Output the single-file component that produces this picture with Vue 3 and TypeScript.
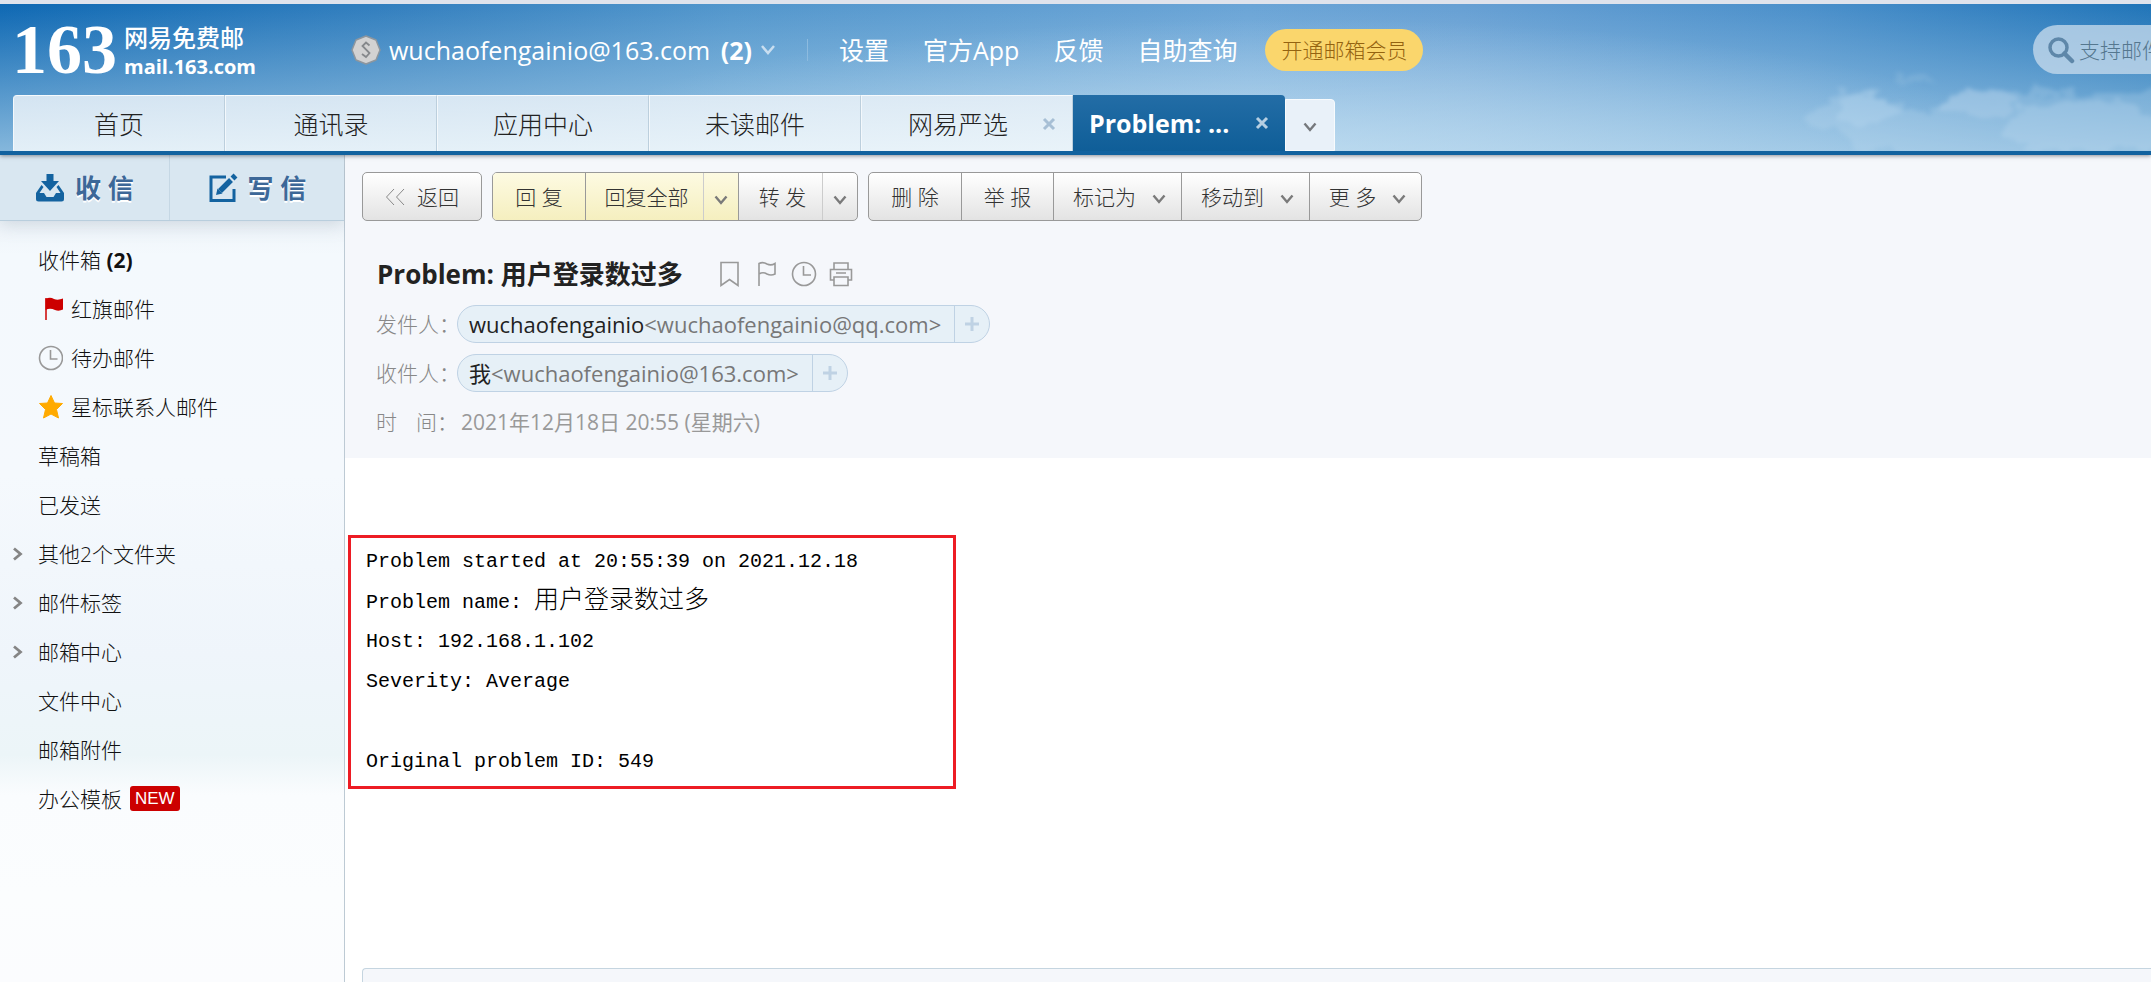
<script setup lang="ts">
import { ref } from 'vue'

interface Tab { label: string; closable?: boolean; active?: boolean }
interface Folder { label: string; count?: number; icon?: 'flag' | 'clock' | 'star'; expandable?: boolean; isNew?: boolean }
interface Contact { label: string; name: string; address: string }

const links: string[] = ['设置', '官方App', '反馈', '自助查询']
const tabs: Tab[] = [
  { label: '首页' },
  { label: '通讯录' },
  { label: '应用中心' },
  { label: '未读邮件' },
  { label: '网易严选', closable: true },
  { label: 'Problem: ...', closable: true, active: true },
]
const folders: Folder[] = [
  { label: '收件箱', count: 2 },
  { label: '红旗邮件', icon: 'flag' },
  { label: '待办邮件', icon: 'clock' },
  { label: '星标联系人邮件', icon: 'star' },
  { label: '草稿箱' },
  { label: '已发送' },
  { label: '其他2个文件夹', expandable: true },
  { label: '邮件标签', expandable: true },
  { label: '邮箱中心', expandable: true },
  { label: '文件中心' },
  { label: '邮箱附件' },
  { label: '办公模板', isNew: true },
]
const contacts: Contact[] = [
  { label: '发件人：', name: 'wuchaofengainio', address: '<wuchaofengainio@qq.com>' },
  { label: '收件人：', name: '我', address: '<wuchaofengainio@163.com>' },
]
const keyword = ref('')
</script>

<template>
  <div class="page">
    <header class="header">
      <svg class="clouds" viewBox="0 0 420 90" aria-hidden="true">
        <defs>
          <filter id="soft" x="-20%" y="-40%" width="140%" height="180%">
            <feTurbulence type="fractalNoise" baseFrequency=".035 .06" numOctaves="4" seed="7" result="n" />
            <feDisplacementMap in="SourceGraphic" in2="n" scale="34" xChannelSelector="R" yChannelSelector="G" />
            <feGaussianBlur stdDeviation="2" />
          </filter>
        </defs>
        <g fill="#c3dcef" filter="url(#soft)">
          <path opacity=".26" d="M70 60Q84 42 98 46Q110 28 126 32Q138 24 154 34L170 48Q186 62 204 46Q220 32 240 30Q266 24 296 32H460V110H190Q120 80 70 60Z" />
          <ellipse opacity=".26" cx="140" cy="46" rx="34" ry="14" />
          <ellipse opacity=".3" cx="250" cy="42" rx="38" ry="12" />
          <ellipse opacity=".28" cx="360" cy="66" rx="90" ry="26" />
          <ellipse opacity=".16" cx="180" cy="18" rx="20" ry="4" />
        </g>
      </svg>
      <div class="topbar">
        <a class="logo" href="#">
          <span class="logo-mark">163</span>
          <span class="logo-text"><span>网易免费邮</span><span class="logo-domain">mail.163.com</span></span>
        </a>
        <button class="account" type="button">
          <svg width="30" height="30" viewBox="0 0 30 30">
            <path d="M15 1L20 3L25 5L27 10L29 15L27 20L25 25L20 27L15 29L10 27L5 25L3 20L1 15L3 10L5 5L10 3Z" fill="#d2d2d2" stroke="#8d969e" stroke-width="1.5" stroke-linejoin="round" />
            <path d="M18.500 10.500L15 7.500L11.500 11L18.500 18L15 22L11 19" fill="none" stroke="#85888b" stroke-width="1.800" />
          </svg>
          <span class="address">wuchaofengainio@163.com <b>(2)</b></span>
          <svg width="16" height="12" viewBox="0 0 16 12"><path d="M2 2L8 9L14 2" fill="none" stroke="#c9def0" stroke-width="2.500" /></svg>
        </button>
        <span class="divider"></span>
        <nav class="links"><a v-for="l in links" :key="l" href="#">{{ l }}</a></nav>
        <button class="vip" type="button">开通邮箱会员</button>
        <label class="search">
          <svg width="28" height="28" viewBox="0 0 28 28"><circle cx="11.500" cy="11.500" r="8.500" fill="none" stroke="#5e87a9" stroke-width="3.500" /><path d="M17.500 17.500L25 25" stroke="#5e87a9" stroke-width="4.500" stroke-linecap="round" /></svg>
          <input v-model="keyword" type="text" placeholder="支持邮件全文搜索" aria-label="支持邮件全文搜索" />
        </label>
      </div>
      <nav class="tabs">
        <div v-for="t in tabs" :key="t.label" class="tab" :class="{ active: t.active, closable: t.closable }">
          <a href="#">{{ t.label }}</a>
          <button v-if="t.closable" type="button" aria-label="关闭">
            <svg width="14" height="14" viewBox="0 0 14 14"><path d="M2 2L12 12M12 2L2 12" fill="none" stroke="currentColor" stroke-width="3" /></svg>
          </button>
        </div>
        <button class="tab-more" type="button" aria-label="更多标签">
          <svg width="14" height="10" viewBox="0 0 14 10"><path d="M1.500 1.500L7 8L12.500 1.500" fill="none" stroke="#75787c" stroke-width="2.400" /></svg>
        </button>
      </nav>
    </header>

    <div class="body">
      <aside class="sidebar">
        <div class="actions">
          <button type="button">
            <svg width="30" height="30" viewBox="0 0 30 30" fill="#1463a0">
              <path d="M11.500 1H18.500V8H24L15 18L6 8H11.500Z" />
              <path fill-rule="evenodd" d="M6.500 12L1 20V26Q1 28.500 3.500 28.500H26.500Q29 28.500 29 26V20L23.500 12L21.500 14L25.500 20H21L18.500 24H11.500L9 20H4.500L8.500 14Z" />
            </svg>
            <span>收 信</span>
          </button>
          <button type="button">
            <svg width="30" height="30" viewBox="0 0 30 30" fill="none" stroke="#1463a0">
              <path d="M18 4H3V27.500H26V16" stroke-width="3" />
              <path d="M12 18L23 7" stroke-width="5.500" /><path d="M24.500 5.500L27.500 2.500" stroke-width="5.500" />
              <path d="M8 22L9.500 15.500L14.500 20.500Z" fill="#1463a0" stroke="none" />
            </svg>
            <span>写 信</span>
          </button>
        </div>
        <ul class="folders">
          <li v-for="f in folders" :key="f.label">
            <span class="expander">
              <svg v-if="f.expandable" width="10" height="14" viewBox="0 0 10 14"><path d="M1 1.500L7.500 7L1 12.500" fill="none" stroke="#858585" stroke-width="2.800" /></svg>
            </span>
            <a href="#">
              <svg v-if="f.icon === 'flag'" width="25" height="24" viewBox="0 0 25 24"><path d="M8 1V23" stroke="#c00" stroke-width="1.500" /><path d="M7.500 2Q12-.5 16 2Q20 3.500 25 1.500V12.500Q21 14.500 17 13Q12 10.500 7.500 13Z" fill="#c00" /></svg>
              <svg v-else-if="f.icon === 'clock'" width="25" height="26" viewBox="0 0 25 26" fill="none" stroke="#999" stroke-width="1.600"><circle cx="13" cy="13" r="11.500" /><path d="M12.500 5V14H19.500" /></svg>
              <svg v-else-if="f.icon === 'star'" width="25" height="26" viewBox="0 0 25 26"><path d="M13 1.500L16.500 9L24.500 9.500L18.500 15.500L20.500 24L13 20L5.500 24L7.500 15.500L1.500 9.500L9.500 9Z" fill="#fa0" stroke="#fa0" stroke-linejoin="round" /></svg>
              <span>{{ f.label }}<b v-if="f.count"> ({{ f.count }})</b></span>
              <em v-if="f.isNew">NEW</em>
            </a>
          </li>
        </ul>
      </aside>

      <main class="main">
        <section class="mail-head">
          <div class="toolbar">
            <div class="group"><button type="button" class="back">
              <svg width="20" height="18" viewBox="0 0 20 18" fill="none" stroke="#888"><path d="M9 1L1.500 9L9 17M19 1L11.500 9L19 17" /></svg>返回</button></div>
            <div class="group">
              <button type="button" class="yellow two">回 复</button>
              <button type="button" class="yellow all">回复全部</button>
              <button type="button" class="yellow drop" aria-label="回复选项"><svg class="chev" viewBox="0 0 14 10"><path d="M1.500 1.500L7 8L12.500 1.500" /></svg></button>
              <button type="button" class="forward">转 发</button>
              <button type="button" class="drop" aria-label="转发选项"><svg class="chev" viewBox="0 0 14 10"><path d="M1.500 1.500L7 8L12.500 1.500" /></svg></button>
            </div>
            <div class="group">
              <button type="button" class="two">删 除</button>
              <button type="button" class="two">举 报</button>
              <button type="button" class="menu">标记为<svg class="chev" viewBox="0 0 14 10"><path d="M1.500 1.500L7 8L12.500 1.500" /></svg></button>
              <button type="button" class="menu">移动到<svg class="chev" viewBox="0 0 14 10"><path d="M1.500 1.500L7 8L12.500 1.500" /></svg></button>
              <button type="button" class="menu last">更 多<svg class="chev" viewBox="0 0 14 10"><path d="M1.500 1.500L7 8L12.500 1.500" /></svg></button>
            </div>
          </div>
          <div class="subject">
            <h1>Problem: 用户登录数过多</h1>
            <div class="marks">
              <button type="button" aria-label="标签"><svg viewBox="0 0 26 26"><path d="M4 1.500H21V24.500L12.500 18.500L4 24.500Z" /></svg></button>
              <button type="button" aria-label="红旗"><svg viewBox="0 0 26 26"><path d="M5 25V2.500Q9 .5 13 3Q17 5 21 2.500V13Q17 15 13 13Q9 10.500 5 13" /></svg></button>
              <button type="button" aria-label="待办"><svg viewBox="0 0 26 26"><circle cx="13" cy="13" r="11.500" /><path d="M12.500 5V14H20" /></svg></button>
              <button type="button" aria-label="打印"><svg viewBox="0 0 26 26"><path d="M6 8V2H20V8M6 19H2.500V8.500H23.500V19H20M6 16H20V24.500H6ZM8 12H18" /></svg></button>
            </div>
          </div>
          <dl class="meta">
            <div v-for="c in contacts" :key="c.label">
              <dt>{{ c.label }}</dt>
              <dd class="pill">
                <span><span class="name">{{ c.name }}</span>{{ c.address }}</span>
                <button type="button" aria-label="添加联系人"><svg width="14" height="14" viewBox="0 0 14 14"><path d="M7 0V14M0 7H14" stroke="#bfd2e4" stroke-width="3" /></svg></button>
              </dd>
            </div>
            <div><dt class="time"><span>时</span><span>间：</span></dt><dd class="date">2021年12月18日 20:55 (星期六)</dd></div>
          </dl>
        </section>
        <section class="mail-body">
          <div class="content">
            <p>Problem started at 20:55:39 on 2021.12.18</p>
            <p>Problem name: <span class="cjk">用户登录数过多</span></p>
            <p>Host: 192.168.1.102</p>
            <p>Severity: Average</p>
            <p>&nbsp;</p>
            <p>Original problem ID: 549</p>
          </div>
          <div class="reply"></div>
        </section>
      </main>
    </div>
  </div>
</template>

<style>
html, body, #app { height: 100%; }
body { margin: 0; overflow: hidden; }
</style>

<style scoped>
* { box-sizing: border-box; }
.page { height: 100%; display: flex; flex-direction: column; overflow: hidden; font: 21px/30px "Open Sans", "Noto Sans CJK SC", sans-serif; color: #222; background: #fff; }
button { font: inherit; color: inherit; background: none; border: 0; padding: 0; cursor: pointer; }
a { color: inherit; text-decoration: none; }
svg { display: block; flex: none; }

.header {
  position: relative; z-index: 1; display: flex; flex-direction: column; flex: none; height: 155px;
  border-top: 4px solid #dfe3ec; border-bottom: 4px solid #12629f;
  box-shadow: 0 1px 4px rgba(60, 60, 70, .55);
  background:
    linear-gradient(180deg, rgba(205, 231, 245, 0) 0%, rgba(205, 231, 245, .62) 100%),
    radial-gradient(ellipse 34% 90% at 60% 100%, rgba(205, 227, 243, .5), rgba(205, 227, 243, 0)),
    linear-gradient(90deg, #0e68b3 0%, #3480bf 19%, #5296cc 34%, #6aa4d6 58%, #669fd3 68%, #4a8fca 84%, #2074b8 100%);
}
.clouds { position: absolute; right: 0; bottom: 0; width: 420px; height: 90px; }
.topbar { display: flex; align-items: center; flex: none; height: 91px; padding-left: 12px; position: relative; overflow: hidden; color: #fff; font-size: 25px; }
.logo { display: flex; align-items: center; width: 339px; gap: 7px; flex: none; }
.logo-mark { font: bold 70px/60px "Liberation Serif", serif; }
.logo-text { display: flex; flex-direction: column; padding-top: 4px; font-size: 24px; line-height: 29px; font-weight: 500; }
.logo-domain { font-size: 20px; font-weight: 700; }
.account { display: flex; align-items: center; gap: 8px; flex: none; }
.address b { margin-left: 4px; }
.divider { width: 1px; height: 22px; margin: 0 31px; background: #8dbbdf; flex: none; }
.links { display: flex; gap: 34px; flex: none; }
.vip { flex: none; margin-left: 28px; height: 42px; padding: 0 16px; border-radius: 21px; background: #fad66c; color: #946310; font-size: 21px; font-weight: 300; }
.search { display: flex; align-items: center; flex: none; gap: 4px; width: 300px; height: 49px; margin-left: auto; margin-right: -182px; padding-left: 14px; border-radius: 25px; background: rgba(197, 218, 236, .78); }
.search input { font: inherit; font-size: 21px; font-weight: 300; border: 0; background: none; outline: 0; width: 240px; padding: 0; }
.search input::placeholder { color: #55778f; opacity: 1; }

.tabs { display: flex; align-items: flex-end; height: 56px; padding-left: 13px; position: relative; }
.tab { display: flex; align-items: center; justify-content: center; width: 212px; height: 56px; font-size: 25px; font-weight: 300; color: #222; border-top: 1px solid #f6fafd; border-left: 1px solid #f3f8fc; border-right: 1px solid #bccfdd; background: linear-gradient(rgba(233, 241, 248, .85), rgba(240, 247, 251, .88)); }
.tab:first-child { border-top-left-radius: 4px; }
.tab.closable { justify-content: space-between; padding: 0 16px 0 46px; }
.tab button { color: #a7bfd5; }
.tab.active { padding: 0 16px; font-weight: 700; color: #fff; border: 0; border-top-right-radius: 4px; background: linear-gradient(#236da6, #0f5e98); }
.tab.active button { color: #b6cfe2; }
.tab-more { display: flex; align-items: center; justify-content: center; width: 50px; height: 52px; padding-top: 4px; background: #e9f1f9; border: 1px solid #f8fbfd; border-radius: 0 4px 0 0; }

.body { display: flex; flex: 1; min-height: 0; }
.sidebar { width: 345px; flex: none; border-right: 1px solid #bdcad4; background: linear-gradient(#eef4f9 65px, #f4f9fd 100px, #f5f9fd 320px, #eff5fb 500px, #ecf5f8 600px, #fafcfe 640px, #fbfdfe 740px, #fbfcfe 100%); }
.actions { display: grid; grid-template-columns: 169px 1fr; height: 66px; border-bottom: 1px solid #b9cedd; box-shadow: 0 4px 16px rgba(120, 135, 155, .25); background: #d9e7f1; }
.actions button { display: flex; align-items: center; justify-content: center; gap: 10px; font-size: 26px; font-weight: 700; color: #3d6898; text-shadow: 0 2px 0 #fff; }
.actions button + button { border-left: 1px solid #c5d7e4; }
.folders { list-style: none; margin: 0; padding: 14px 0 0; font-weight: 300; color: #111; }
.folders li { display: flex; align-items: center; height: 49px; }
.folders a { display: flex; align-items: center; gap: 8px; }
.folders b { font-weight: 700; }
.expander { width: 25px; margin-left: 13px; flex: none; }
.folders em { font: 17px/25px "Liberation Sans", sans-serif; color: #fff; background: #c00; border-radius: 3px; padding: 0 5px; }

.main { flex: 1; min-width: 0; display: flex; flex-direction: column; }
.mail-head { background: #f5f7fb; height: 303px; padding: 17px 17px 0; flex: none; }
.toolbar { display: flex; gap: 10px; color: #333; font-weight: 300; }
.group { display: flex; height: 49px; border: 1px solid #999; border-radius: 5px; overflow: hidden; background: linear-gradient(#fff, #e3e3e3); }
.group button { display: flex; align-items: center; justify-content: center; white-space: pre; }
.group button + button { border-left: 1px solid #999; }
.group .back { width: 118px; gap: 12px; }
.group .two { width: 92px; }
.group .all { width: 118px; padding-left: 4px; }
.group .forward { width: 84px; padding-left: 4px; }
.group button.drop { width: 35px; padding-top: 6px; border-left: 1px solid #ccc; }
.group .yellow { background: linear-gradient(#fdfae2, #f5efbf); }
.group .menu { width: 128px; gap: 16px; padding-left: 4px; }
.group .last { width: 112px; }
.chev { width: 14px; height: 10px; fill: none; stroke: #7a7a7a; stroke-width: 2.400; }
.menu .chev { margin-top: 5px; }
.subject { display: flex; align-items: center; gap: 34px; height: 36px; margin: 35px 0 13px 15px; }
h1 { margin: 0; font-size: 26px; line-height: 36px; font-weight: 700; }
.marks { display: flex; gap: 11px; }
.marks svg { width: 26px; height: 26px; fill: none; stroke: #999; stroke-width: 1.6; }
.meta { margin: 0 0 0 14px; color: #888; }
.meta > div { display: flex; align-items: center; height: 38px; margin-bottom: 11px; }
dt { width: 81px; flex: none; white-space: nowrap; font-weight: 300; }
.time { display: flex; gap: 19px; }
dd { margin: 0; }
.pill { display: flex; align-items: center; height: 38px; border: 1px solid #bfd2e4; border-radius: 19px; background: #e6f0f7; padding-left: 11px; font-size: 22px; color: #777; }
.name { color: #222; }
.pill button { display: flex; align-items: center; justify-content: center; width: 35px; height: 36px; border-left: 1px solid #bfd2e4; margin-left: 13px; }
.date { padding-left: 4px; color: #999; }
.mail-body { flex: 1; min-height: 0; display: flex; flex-direction: column; padding: 77px 0 0 3px; }
.content { width: 608px; border: 3px solid #ed1c24; padding: 4px 15px; font: 20px/40px "Liberation Mono", "Noto Sans CJK SC", monospace; color: #000; }
.content p { margin: 0; height: 40px; }
.cjk { font-size: 25px; font-weight: 300; }
.reply { margin: auto 0 0 14px; height: 14px; border: 1px solid #c5d5e0; border-width: 1px 0 0 1px; border-top-left-radius: 4px; background: #f5f7fb; }
</style>
